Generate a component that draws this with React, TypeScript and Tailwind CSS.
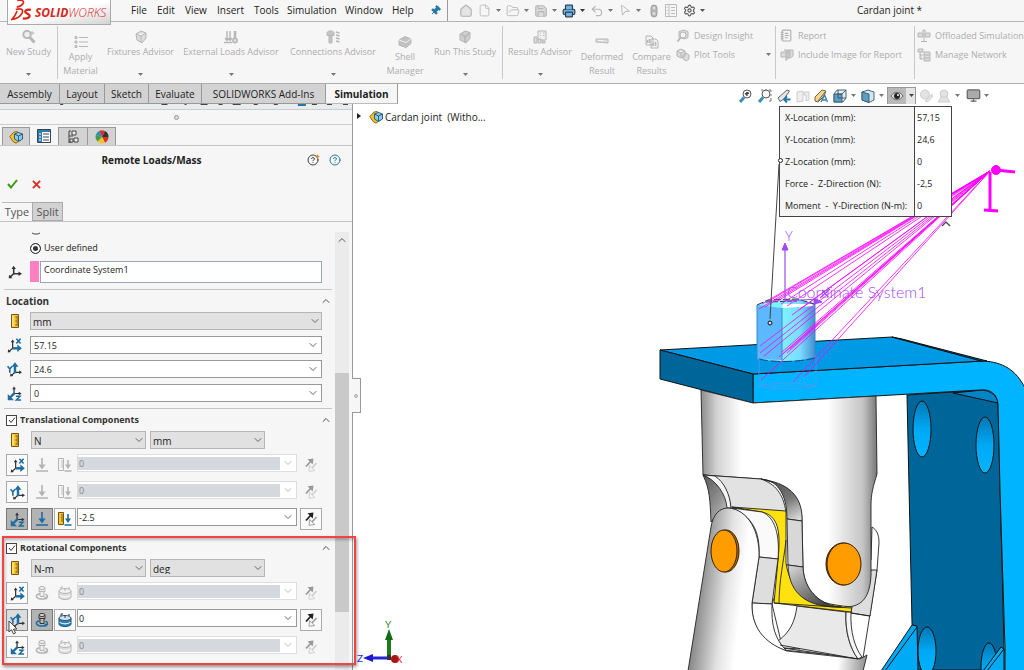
import { useState, type ReactNode } from "react";
import clsx from "clsx";
import {
  Box, ChevronDown, ChevronUp, CircleHelp, File, FolderOpen, Home, Monitor,
  MousePointer2, NotebookText, Pin, Printer, Save, Settings, Undo2,
} from "lucide-react";

const MENU = [
  { name: "File", width: "w-[26px]" },
  { name: "Edit", width: "w-[28px]" },
  { name: "View", width: "w-[32px]" },
  { name: "Insert", width: "w-[37px]" },
  { name: "Tools", width: "w-[33px]" },
  { name: "Simulation", width: "w-[58px]" },
  { name: "Window", width: "w-[47px]" },
  { name: "Help", width: "w-[38px]" },
];

const TABS = [
  { name: "Assembly", width: "w-[60px]" },
  { name: "Layout", width: "w-[45px]" },
  { name: "Sketch", width: "w-[44px]" },
  { name: "Evaluate", width: "w-[53px]" },
  { name: "SOLIDWORKS Add-Ins", width: "w-[124px]" },
  { name: "Simulation", width: "w-[72px]" },
];

const CALLOUT = [
  ["X-Location (mm):", "57,15"],
  ["Y-Location (mm):", "24,6"],
  ["Z-Location (mm):", "0"],
  ["Force -  Z-Direction (N):", "-2,5"],
  ["Moment  -  Y-Direction (N-m):", "0"],
];

// points on the shaft where the load is spread
const RAY_ENDS = [
  [759, 309], [762, 304], [765, 307], [769, 301], [776, 302], [781, 304], [787, 306],
  [792, 315], [799, 310], [760, 346], [760, 353], [764, 356],
  [779, 357], [782, 352], [783, 354], [787, 353], [790, 349], [761, 380], [793, 382], [804, 377],
];

type Axis = "x" | "y" | "z";

/* ---------- small icons ---------- */

function Caret({ className = "fill-[#777]" }: { className?: string }) {
  return (
    <svg viewBox="0 0 5 3" className={clsx("h-[3px] w-[5px] shrink-0", className)}>
      <path d="M0 0h5L2.5 3z" />
    </svg>
  );
}

function AxisIcon({ axis }: { axis?: Axis }) {
  const dark = "#333";
  const blue = "#1d6d9e";
  if (axis === "x") {
    return (
      <svg viewBox="0 0 16 16" className="size-[15px] shrink-0" fill="none">
        <path d="M6 11V4M6 11l-4 3.500" stroke={dark} strokeWidth="1.300" />
        <path d="M4 4.500 6 1.500l2 3zM.8 15.500l.4-3.500 3 3z" fill={dark} />
        <path d="M6 11h6" stroke={blue} strokeWidth="2.600" />
        <path d="m11 7 4.800 4L11 15z" fill={blue} />
        <path d="m10 .8 4.500 5M14.500.8 10 5.800" stroke={blue} strokeWidth="1.700" />
      </svg>
    );
  }
  if (axis === "y") {
    return (
      <svg viewBox="0 0 16 16" className="size-[15px] shrink-0" fill="none">
        <path d="M8.500 11H14M8.500 11l-4 3.500" stroke={dark} strokeWidth="1.300" />
        <path d="m13 9 3 2-3 2zM3.300 15.500l.4-3.500 3 3z" fill={dark} />
        <path d="M8.500 12V4" stroke={blue} strokeWidth="2.600" />
        <path d="m4.800 5 3.700-4.800L12.200 5z" fill={blue} />
        <path d="M.6 4.500 3 7.500l2.400-3M3 7.500v4" stroke={blue} strokeWidth="1.700" />
      </svg>
    );
  }
  if (axis === "z") {
    return (
      <svg viewBox="0 0 16 16" className="size-[15px] shrink-0" fill="none">
        <path d="M7.500 8V3M7.500 8H13" stroke={dark} strokeWidth="1.300" />
        <path d="m5.500 3.500 2-3 2 3zM12.500 6l3 2-3 2z" fill={dark} />
        <path d="m8 7.500-4.500 4.500" stroke={blue} strokeWidth="2.600" />
        <path d="M.8 8.500v6.700h6.700z" fill={blue} />
        <path d="M9.500 10.800h4.400L10 15h5" stroke={blue} strokeWidth="1.600" />
      </svg>
    );
  }
  return (
    <svg viewBox="0 0 16 16" className="size-[14px] shrink-0" fill="none">
      <path d="M6.500 10V3M6.500 10H13M6.500 10l-4 3.500" stroke={dark} strokeWidth="1.800" />
      <path d="M4 4.500 6.500.8 9 4.500zM12 7.500l4 2.500-4 2.500zM.8 15.200l.4-4.200 4 4z" fill={dark} />
    </svg>
  );
}

function RulerIcon() {
  return (
    <svg viewBox="0 0 8 14" className="h-[14px] w-[8px] shrink-0">
      <path d="M.5.5h7v13h-7z" fill="#f4c430" stroke="#7a5410" />
      <path d="M4.500 3H7M5.500 5H7M4.500 7H7M5.500 9H7M4.500 11H7" stroke="#5d3f08" strokeWidth=".9" />
      <path d="M2 1.500v11" stroke="#ffe78a" strokeWidth="1.500" />
    </svg>
  );
}

function ForceIcon({ on }: { on: boolean }) {
  const color = on ? "#1d6d9e" : "#b4b4b4";
  return (
    <svg viewBox="0 0 14 14" className="size-[14px]" fill="none">
      <path d="M7 0v10M1 13h12" stroke={color} strokeWidth="1.600" />
      <path d="m3.400 6.500 3.600 5 3.600-5z" fill={color} />
    </svg>
  );
}

function DistanceIcon({ on }: { on: boolean }) {
  const color = on ? "#1d6d9e" : "#b4b4b4";
  return (
    <svg viewBox="0 0 14 14" className="size-[14px]" fill="none">
      <path d="M.5.500h5v12h-5z" fill={on ? "#f4c430" : "#f5f5f5"} stroke={on ? "#7a5410" : "#b4b4b4"} />
      <path d="M3 3h2M3 5h2M3 7h2M3 9h2" stroke={on ? "#5d3f08" : "#b4b4b4"} strokeWidth=".8" />
      <path d="M10 2v8M6.500 13H13.500" stroke={color} strokeWidth="1.600" />
      <path d="m7 6.500 3 4.500 3-4.500z" fill={color} />
    </svg>
  );
}

function MomentIcon({ on }: { on: boolean }) {
  const line = on ? "#333" : "#b4b4b4";
  const arrow = on ? "#1d6d9e" : "#b4b4b4";
  return (
    <svg viewBox="0 0 14 14" className="size-[14px]" fill="none">
      <path d="M4 2.500h6v3H4zM5 5.500h4v5H5z" fill={on ? "#bbb" : "#eee"} stroke={line} />
      <ellipse cx="7" cy="2" rx="3" ry="1.500" fill={on ? "#ddd" : "#f1f1f1"} stroke={line} />
      <path d="M5 8H3.500C-.5 9.500 1.500 13 7 13s7-3.500 3.500-4.800" stroke={arrow} strokeWidth="1.600" />
      <path d="m9 10.500 4.500.8L10.800 14z" fill={arrow} />
    </svg>
  );
}

function TwistIcon({ on }: { on: boolean }) {
  return (
    <svg viewBox="0 0 14 14" className="size-[14px]" fill="none">
      <path d="M1 5v6c0 3.300 12 3.300 12 0V5" fill={on ? "#2f7fb0" : "#dedede"} stroke={on ? "#174e70" : "#b4b4b4"} />
      <ellipse cx="7" cy="5" rx="6" ry="2.500" fill={on ? "#cfe4f0" : "#f1f1f1"} stroke={on ? "#2b566f" : "#b4b4b4"} />
      <path d="M1.500 9c2 2.500 9 2.500 11 0" stroke={on ? "#e8f4fb" : "#fafafa"} strokeWidth="1.200" />
      <path d="M3 3V1h2M11 3V1M7 2v3" stroke={on ? "#333" : "#b4b4b4"} />
    </svg>
  );
}

function ReverseIcon({ on }: { on: boolean }) {
  return (
    <svg viewBox="0 0 14 14" className="size-[14px]" fill="none">
      <path d="M2 8.500 7 3" stroke={on ? "#222" : "#999"} strokeWidth="1.800" />
      <path d="M3.500 1.300 9.500.5 8.700 6.500z" fill={on ? "#222" : "#999"} />
      <path d="m12.500 5-5 5.500" stroke={on ? "#999" : "#ccc"} strokeWidth="1.500" />
      <path d="M10.800 12.500 5 13.300l.6-5.800z" fill="#f6f6f6" stroke={on ? "#999" : "#ccc"} strokeWidth=".9" />
    </svg>
  );
}

function AssemblyIcon() {
  return (
    <svg viewBox="0 0 14 14" className="size-[14px] shrink-0">
      <path d="M.8 6.500 5 2l3-.5 4 3v5l-5 3.700-3-1.700z" fill="#f2c22e" stroke="#85600c" strokeWidth=".9" />
      <path d="m5.500 4 4-1.500 4 1.500v5l-4 2.500-4-2.500z" fill="#8fcbe6" stroke="#1b4f78" strokeWidth=".9" />
      <path d="m5.500 4 4 2 4-2m-4 2v5" fill="none" stroke="#1b4f78" strokeWidth=".9" />
    </svg>
  );
}

function Logo() {
  return (
    <a href="#home" aria-label="SOLIDWORKS" className="absolute top-0 left-[7px] z-10 flex h-[25px] w-[104px] items-center border border-t-0 border-[#aaa] bg-linear-to-br from-white via-white to-[#d4d4d4] pl-[3px] text-[#d9261c]">
      <svg viewBox="0 0 20 20" className="mb-[4px] h-[21px] w-[21px] shrink-0" fill="none" stroke="#d9261c" strokeWidth="1.600">
        <path d="M6 .5c4-1 7 .2 5.500 2.800C10 5.500 8 6.500 5.500 6.800" />
        <path d="M4.500 9c5.500-1.500 7.500 0 6 3.500-1.500 3-4.500 5.300-9.500 6C3 16.500 4.500 14 5.800 10.500" />
        <path d="M19 9.500c-3-.8-5.500-.2-5.500 1.700s4.500 2 4.300 4-3.500 2.800-6.500 2.300" strokeWidth="2.200" />
      </svg>
      <span className="mt-[2px] ml-[3px] font-['Open_Sans',sans-serif] text-[12px] leading-none font-bold italic">
        SOLID<span className="font-light">WORKS</span>
      </span>
    </a>
  );
}

/* ---------- ribbon ---------- */

function QuickAccess() {
  const items: { name: string; icon: ReactNode; caret?: string }[] = [
    { name: "New", icon: <File size={13} strokeWidth={1.5} /> },
    { name: "Open", icon: <FolderOpen size={14} strokeWidth={1.5} /> },
    { name: "Save", icon: <Save size={14} className="fill-[#ddd]" /> },
    { name: "Print", icon: <Printer size={14} className="fill-[#6fb4e0] text-[#2b3f4d]" />, caret: "fill-[#333]" },
    { name: "Undo", icon: <Undo2 size={14} /> },
    { name: "Select", icon: <MousePointer2 size={13} strokeWidth={1.5} className="rotate-[15deg]" /> },
  ];
  return (
    <div className="ml-[11px] flex items-center text-[#b5b5b5]">
      <button aria-label="Home" className="mr-[5px] w-[14px]"><Home size={14} className="fill-[#e4e4e4]" /></button>
      {items.map((item) => (
        <button key={item.name} aria-label={item.name} className="flex w-[28px] items-center gap-[4px]">
          <span className="w-[14px]">{item.icon}</span>
          <Caret className={item.caret} />
        </button>
      ))}
      <button aria-label="Rebuild" className="w-[16px]">
        <svg viewBox="0 0 8 14" className="mx-auto h-[14px] w-[8px]">
          <rect x="1" y="1" width="6" height="12" rx="3" fill="#b5b5b5" stroke="#a0a0a0" />
          <circle cx="4" cy="4" r="1.500" fill="#ddd" />
          <circle cx="4" cy="9.500" r="1.500" fill="#ddd" />
        </svg>
      </button>
      <button aria-label="File properties" className="mr-[4px] ml-[3px] w-[14px]">
        <svg viewBox="0 0 12 13" className="h-[13px] w-[12px]" fill="none" stroke="#bbb">
          <path d="M.5.500h11v12H.500zM4 .5v12M6 3.500h4M6 6.500h4M6 9.500h4M1.500 3.500h1M1.500 6.500h1M1.500 9.500h1" />
        </svg>
      </button>
      <button aria-label="Options" className="flex w-[28px] items-center gap-[4px] text-[#555]">
        <Settings size={13} />
        <Caret className="fill-[#555]" />
      </button>
    </div>
  );
}

function RibbonButton({ icon, label, width, wrap }: { icon: ReactNode; label: string; width: string; wrap?: boolean }) {
  return (
    <button className={clsx("flex h-full shrink-0 flex-col items-center text-[9px]", width, wrap ? "pt-[13px]" : "pt-[8px]")}>
      <span className="flex h-[14px] items-center">{icon}</span>
      <span className={clsx("pt-px leading-[14px]", wrap ? "w-min whitespace-normal" : "whitespace-nowrap")}>{label}</span>
      {!wrap && <Caret className="mt-[14px] fill-[#777]" />}
    </button>
  );
}

function RibbonLine({ icon, label, caret }: { icon: ReactNode; label: string; caret?: boolean }) {
  return (
    <button className="flex h-[19px] w-full items-center gap-[4px] text-left text-[9px] whitespace-nowrap">
      <span className="w-[14px] shrink-0">{icon}</span>
      <span className="flex-1">{label}</span>
      {caret && <Caret className="mr-[4px] fill-[#777]" />}
    </button>
  );
}

function GrayIcon({ children }: { children: ReactNode }) {
  return (
    <svg viewBox="0 0 14 14" className="size-[14px]" fill="#dcdcdc" stroke="#b6b6b6" strokeLinejoin="round">
      {children}
    </svg>
  );
}

function Divider() {
  return <div className="my-[4px] w-px shrink-0 bg-[#c8c8c8]" />;
}

function Ribbon() {
  return (
    <div className="flex h-[62px] shrink-0 overflow-hidden border-b border-[#adadad] bg-[#f6f6f6] text-[#adadad]">
      <RibbonButton
        width="w-[57px]"
        label="New Study"
        icon={<GrayIcon><circle cx="5" cy="4.500" r="3.700" fill="#eee" strokeWidth="1.800" /><path d="m8 7.500 4.500 5" strokeWidth="3" /><path d="M10 1v4M8.500 3h4" /></GrayIcon>}
      />
      <Divider />
      <RibbonButton width="w-[45px]" label="Apply Material" wrap icon={<GrayIcon><path d="M1 1.500h2v2H1zM1 6h2v2H1zM1 10.500h2v2H1zM5 2.500h9M5 7h9M5 11.500h9" /></GrayIcon>} />
      <RibbonButton width="w-[75px]" label="Fixtures Advisor" icon={<GrayIcon><path d="m2 4 5-3 5 2v5L8 13l-5-3zM2 4l5 2 5-3M7 6v6" /></GrayIcon>} />
      <RibbonButton
        width="w-[106px]"
        label="External Loads Advisor"
        icon={<GrayIcon><path d="M3 1v9M6 1v9M0 12.500h8M1 8l2 2.500L4.500 8M4.500 8 6 10.500 8 8" fill="none" strokeWidth="1.400" /><path d="M11 1v7" strokeWidth="2.500" /><circle cx="11" cy="10.500" r="2.200" strokeWidth="1.400" /></GrayIcon>}
      />
      <RibbonButton
        width="w-[98px]"
        label="Connections Advisor"
        icon={<GrayIcon><path d="M1 2.500C2 .5 7 .5 8 2.500v3H1zM3 5.500h3V13H3z" fill="#c4c4c4" /><path d="m10 2 3.500 1M10 5l3.500 1M10 8l3.500 1M10 11l3.500 1" strokeWidth="1.800" /></GrayIcon>}
      />
      <RibbonButton width="w-[46px]" label="Shell Manager" wrap icon={<GrayIcon><path d="m1 5 6-3.500L13 4v4.500L8 12.500 1 10z" fill="#c2c2c2" /><path d="m1 5 7 2.500L13 4" fill="none" stroke="#eee" /></GrayIcon>} />
      <RibbonButton width="w-[74px]" label="Run This Study" icon={<GrayIcon><path d="m2 4 5-3 5 1.500v6L8 13l-6-3z" fill="#cfcfcf" /><path d="m4 4 3 3 5-4.500M7 7v5" fill="none" strokeWidth="1.600" /></GrayIcon>} />
      <Divider />
      <RibbonButton width="w-[74px]" label="Results Advisor" icon={<GrayIcon><path d="M5 1h8v9H5z" fill="#f1f1f1" /><path d="M7 3h1M10 3h1.500M7 5.500h1M10 5.500h1.500M1 7h3v6H1zM5 9h3v4H5zM9 11h3v2H9z" /></GrayIcon>} />
      <RibbonButton width="w-[50px]" label="Deformed Result" wrap icon={<GrayIcon><path d="M1 4h12v4h-2L9 7.500 1 7z" /><path d="M3 5.500h6" stroke="#f4f4f4" /></GrayIcon>} />
      <RibbonButton width="w-[49px]" label="Compare Results" wrap icon={<GrayIcon><path d="M1 1h5l2 2v7H1zM6 4h5l2 2v7H6z" fill="#f1f1f1" /><path d="M2.500 5v3M4.500 4v4M8 8v3M10.500 7v4" strokeWidth="1.500" /></GrayIcon>} />
      <div className="w-[99px] shrink-0 pt-[4px]">
        <RibbonLine label="Design Insight" icon={<GrayIcon><path d="M3 2.500 8 1l4 1.500v6L8 10 3 8z" /><circle cx="7" cy="6" r="3" fill="#f4f4f4" /><path d="m5 8-3.500 4.500" strokeWidth="2" /></GrayIcon>} />
        <RibbonLine label="Plot Tools" caret icon={<GrayIcon><path d="m1 3 4-2 4 2v5L5 10 1 8zM1 3l4 2 4-2M5 5v5M7 7l3-2 3 2v4l-3 2-3-2z" /></GrayIcon>} />
      </div>
      <Divider />
      <div className="w-[138px] shrink-0 pt-[4px] pl-[4px]">
        <RibbonLine label="Report" icon={<NotebookText size={13} />} />
        <RibbonLine label="Include Image for Report" icon={<GrayIcon><path d="M1 4h7v5H1zM4 2h9v6l-3 2H8" /><path d="m6 4 4-1.500V8L6 12.500z" fill="#c6c6c6" /></GrayIcon>} />
      </div>
      <Divider />
      <div className="shrink-0 pt-[4px] pl-[2px]">
        <RibbonLine label="Offloaded Simulation" icon={<GrayIcon><path d="M1 4h5v4H1zM8 4h5v4H8zM7 1v11M4 12.500h6M5 2.500 7 .5l2 2" /></GrayIcon>} />
        <RibbonLine label="Manage Network" icon={<GrayIcon><path d="M1 1h5v3H1zM3 4v7h3M3 7h3M7 4h6v9H7zM7 7h6M7 10h6" /></GrayIcon>} />
      </div>
    </div>
  );
}

function Magnifier({ area }: { area?: boolean }) {
  return (
    <svg viewBox="0 0 14 14" className="size-[14px]" fill="none">
      {area && <path d="M3 1h2M7 1h2M11 1h2v2M13 5v2M13 9v3h-2" stroke="#777" />}
      <path d="m1 13 4-4.500" stroke="#3d8cba" strokeWidth="3" />
      <circle cx="8" cy="5" r="4" fill="#f4f8fa" stroke="#555" />
      {!area && <path d="m6 5 4-1M8 3v4" stroke="#444" strokeWidth="1.300" />}
    </svg>
  );
}

function BlueBox({ solid }: { solid?: boolean }) {
  return (
    <svg viewBox="0 0 14 14" className="size-[14px]" stroke="#3b5568" strokeWidth=".9">
      {solid ? (
        <>
          <path d="m1 3 6-2 6 2v8l-5 2.500L1 11z" fill="#d3e6f0" />
          <path d="m1 3 7 2v8.500L1 11z" fill="#5b9fc8" />
        </>
      ) : (
        <>
          <path d="m1 5 3-4h9v8l-3 4H1z" fill="#e4edf2" />
          <path d="M1 5h8v8H1z" fill="#5b9fc8" />
          <path d="M5 1v8h8M9 5l4-4M9 5H4" fill="none" />
        </>
      )}
    </svg>
  );
}

function ViewToolbar() {
  return (
    <div className="mr-[35px] ml-auto flex items-center pt-[3px]">
      <button aria-label="Zoom to fit" className="w-[19px]"><Magnifier /></button>
      <button aria-label="Zoom to area" className="w-[19px]"><Magnifier area /></button>
      <button aria-label="Previous view" className="w-[19px]">
        <svg viewBox="0 0 14 14" className="size-[14px]" fill="none">
          <path d="m1 9 9-8 2.500 1L7 10l-4 2.500z" fill="#e6e6e6" stroke="#666" />
          <path d="M13.500 10.500H7m3-3-3 3 3 3" stroke="#2577a8" strokeWidth="1.800" />
        </svg>
      </button>
      <button aria-label="Section view" className="w-[18px]">
        <svg viewBox="0 0 14 14" className="size-[14px]" fill="#eee" stroke="#ccc"><path d="m1 3 6-1v10l-6 1zM8 3h5v8l-3 1V6H8z" /></svg>
      </button>
      <button aria-label="Dynamic annotation" className="w-[19px]">
        <svg viewBox="0 0 14 14" className="size-[14px]" fill="none">
          <path d="m1 8 7-7 4 1-2 5-6 6-3-1z" fill="#f3d58d" stroke="#7a6336" />
          <path d="m4 12 7-9" stroke="#666" />
          <path d="m7 13 3.500-7 3 7M8 11h4" stroke="#3a7da8" strokeWidth="1.400" />
        </svg>
      </button>
      <button aria-label="View orientation" className="flex w-[28px] items-center gap-[4px]"><BlueBox /><Caret /></button>
      <button aria-label="Display style" className="flex w-[26px] items-center gap-[4px]"><BlueBox solid /><Caret /></button>
      <button aria-label="Hide or show items" className="flex h-[18px] w-[29px] items-center border border-[#999] bg-[#e4e4e4]">
        <span className="flex h-full w-[18px] items-center justify-center bg-[#b9b9b9]">
          <svg viewBox="0 0 14 10" className="h-[10px] w-[14px]">
            <path d="M1 5c3-5 9-5 12 0-3 5-9 5-12 0z" fill="#ddd" stroke="#666" />
            <circle cx="7" cy="5" r="3" fill="#222" />
            <circle cx="8" cy="4" r="1" fill="#fff" />
          </svg>
        </span>
        <Caret className="ml-[3px] fill-[#444]" />
      </button>
      <button aria-label="Edit appearance" className="ml-[3px] w-[18px]">
        <svg viewBox="0 0 14 14" className="size-[14px]" fill="#e2e2e2" stroke="#d0d0d0"><circle cx="6" cy="5.500" r="4.500" /><path d="m6 12 7-7 .5 3-5 5z" /></svg>
      </button>
      <button aria-label="Apply scene" className="flex w-[29px] items-center gap-[4px]">
        <svg viewBox="0 0 14 14" className="size-[14px]" fill="#e2e2e2" stroke="#d0d0d0"><circle cx="7" cy="5" r="4" /><path d="M1 13 4 8h6l3 5z" /></svg>
        <Caret />
      </button>
      <button aria-label="View settings" className="flex items-center gap-[3px]"><Monitor size={15} className="fill-[#aaa] text-[#666]" /><Caret /></button>
    </div>
  );
}

/* ---------- property manager ---------- */

function Section({ title, checkbox, children }: { title: string; checkbox?: boolean; children: ReactNode }) {
  const [open, setOpen] = useState(true);
  return (
    <section className="mr-[3px] ml-[4px] border-t border-[#c4c4c4] pb-[6px] pl-[2px]">
      <div className="flex h-[22px] items-center text-[9px] font-bold text-[#333]">
        {checkbox ? (
          <label className="flex items-center gap-[3px]">
            <input type="checkbox" defaultChecked className="peer sr-only" />
            <span className="flex size-[11px] items-center justify-center border border-[#444] bg-white">
              <svg viewBox="0 0 8 8" className="size-[8px]" fill="none" stroke="#333"><path d="m1 4 2 2.500L7 1.500" /></svg>
            </span>
            {title}
          </label>
        ) : (
          <h2 className="text-[10px]">{title}</h2>
        )}
        <button aria-label={`Toggle ${title}`} onClick={() => setOpen(!open)} className="ml-auto">
          <ChevronUp size={12} className={clsx("text-[#555]", !open && "rotate-180")} />
        </button>
      </div>
      {open && children}
    </section>
  );
}

function UnitSelect({ label, value, width }: { label: string; value: string; width: string }) {
  return (
    <div className={clsx("relative h-[18px]", width)}>
      <select aria-label={label} defaultValue={value} className="block h-full w-full appearance-none border border-[#b5b5b5] bg-[#e1e1e1] pt-px pl-[2px] text-[10px] leading-none text-[#222]">
        <option>{value}</option>
      </select>
      <ChevronDown size={12} className="pointer-events-none absolute top-[3px] right-px text-[#666]" />
    </div>
  );
}

function ComboBox({ label, value, disabled, tall }: { label: string; value: string; disabled?: boolean; tall?: boolean }) {
  return (
    <div className={clsx("flex min-w-0 flex-1 items-center border bg-white", tall ? "h-[18px]" : "h-[18px]", disabled ? "border-[#ddd]" : "border-[#999]")}>
      <input
        aria-label={label}
        defaultValue={value}
        disabled={disabled}
        className={clsx("min-w-0 flex-1 text-[9px] leading-[13px] outline-none", tall ? "pl-[3px]" : "pl-px", disabled ? "bg-[#d5d8dd] text-[#888]" : "text-[#222]")}
      />
      <button aria-label={`${label} list`} disabled={disabled} className={clsx("flex w-[16px] justify-center", disabled ? "text-[#bbb]" : "text-[#666]")}>
        <ChevronDown size={12} />
      </button>
    </div>
  );
}

function IconToggle({ label, pressed, boxed, hovered, children }: { label: string; pressed?: boolean; boxed?: boolean; hovered?: boolean; children: ReactNode }) {
  return (
    <button
      aria-label={label}
      aria-pressed={pressed}
      className={clsx(
        "flex size-[22px] shrink-0 items-center justify-center border",
        pressed ? "border-[#777] bg-[#b3b3b3]" : hovered ? "border-[#888] bg-[#dcdcdc]" : boxed ? "border-[#aaa] bg-[#fafafa]" : "border-transparent",
      )}
    >
      {children}
    </button>
  );
}

function ComponentRow({ axis, value, active, hovered, rotation }: { axis: Axis; value: string; active?: boolean; hovered?: boolean; rotation?: boolean }) {
  const kind = rotation ? "rotation" : "translation";
  return (
    <div className="flex h-[22px] pr-[10px]">
      <IconToggle label={`${axis.toUpperCase()} ${kind}`} boxed hovered={hovered} pressed={active && !hovered}>
        <AxisIcon axis={axis} />
      </IconToggle>
      <span className="w-[3px]" />
      <IconToggle label={rotation ? "Moment" : "Force"} pressed={active}>
        {rotation ? <MomentIcon on={!!active} /> : <ForceIcon on={!!active} />}
      </IconToggle>
      <span className="w-px" />
      <IconToggle label={rotation ? "Twist" : "Distance"} boxed={active}>
        {rotation ? <TwistIcon on={!!active} /> : <DistanceIcon on={!!active} />}
      </IconToggle>
      <span className="w-px" />
      <ComboBox label={`${axis.toUpperCase()} ${kind} value`} value={value} disabled={!active} />
      <span className="w-[3px]" />
      <IconToggle label="Reverse direction" boxed={active}>
        <ReverseIcon on={!!active} />
      </IconToggle>
    </div>
  );
}

function UnitRow({ first, second }: { first: string; second: string }) {
  return (
    <div className="flex items-center">
      <span className="flex w-[25px] pl-[5px]"><RulerIcon /></span>
      <UnitSelect label="Unit" value={first} width="w-[115px]" />
      <span className="w-[4px]" />
      <UnitSelect label="Length unit" value={second} width="w-[115px]" />
    </div>
  );
}

function PanelTabs() {
  return (
    <div className="flex h-[21px] shrink-0 items-end border-b border-[#c4c4c4] pl-[2px]">
      <button aria-label="Feature tree" className="flex h-[18px] w-[28px] items-center justify-center border border-b-0 border-[#999] bg-[#d2d2d2]"><AssemblyIcon /></button>
      <button aria-label="Property manager" className="flex h-[18px] w-[28px] items-center justify-center">
        <svg viewBox="0 0 14 14" className="size-[14px]">
          <path d="M.5.500h13v13H.500z" fill="#fff" stroke="#345" />
          <path d="M1 1h12v2H1zM1 3h4v10H1z" fill="#2d7cab" />
          <path d="M2 5h2M2 8h2M2 11h2" stroke="#fff" />
          <path d="M6 5h6M6 8h6M6 11h6" stroke="#345" />
        </svg>
      </button>
      <button aria-label="Configurations" className="flex h-[18px] w-[30px] items-center justify-center border border-b-0 border-[#999] bg-[#d2d2d2]">
        <svg viewBox="0 0 12 14" className="h-[14px] w-[12px]" fill="#eee" stroke="#444">
          <path d="M2 1v12M2 1h2M2 6h4M2 12h3" fill="none" />
          <path d="M5 1h4v4H5zM7 8h4v4H7zM3 9h3v3H3z" />
        </svg>
      </button>
      <button aria-label="Display manager" className="flex h-[18px] w-[28px] items-center justify-center border border-b-0 border-l-0 border-[#999] bg-[#d2d2d2]">
        <svg viewBox="0 0 14 14" className="size-[14px]">
          <path d="M7 7 4 1a6.500 6.500 0 0 1 6 0z" fill="#d8342a" />
          <path d="M7 7 10 1a6.500 6.500 0 0 1 3.500 6z" fill="#333" />
          <path d="M7 7h6.500A6.500 6.500 0 0 1 10 12.700z" fill="#d8342a" />
          <path d="m7 7 3 5.700A6.500 6.500 0 0 1 2.500 11.500z" fill="#f2c22e" />
          <path d="m7 7-4.500 4.500A6.500 6.500 0 0 1 .8 5z" fill="#3da23d" />
          <path d="M7 7 .8 5A6.500 6.500 0 0 1 4 1z" fill="#2f8bc0" />
        </svg>
      </button>
    </div>
  );
}

function PropertyPanel() {
  return (
    <aside className="relative z-10 flex w-[353px] shrink-0 flex-col border-r border-[#999] bg-[#f6f6f6]">
      <div className="h-[6px] shrink-0 border-b border-[#c9cfcf] bg-[#e9ecec]">
        <svg viewBox="0 0 351 2" className="h-[2px] w-full" preserveAspectRatio="none">
          <path d="M60 .5h3M161 .5h6M184 .5h2M200 .5h7M218 .5h4M232 .5h8M253 .5h4M273 .5h4M311 .5h5M326 .5h5M342 .5h5" stroke="#444" />
          <path d="M297 1h8" stroke="#2577a8" strokeWidth="2" />
        </svg>
      </div>
      <div className="flex h-[15px] shrink-0 items-center justify-center border-b border-[#ccc]">
        <span className="size-[5px] rounded-full border border-[#999] bg-[#ddd]" />
      </div>
      <PanelTabs />
      <div className="flex h-[28px] shrink-0 items-center">
        <h1 className="w-[303px] text-center text-[10px] font-bold text-[#222]">Remote Loads/Mass</h1>
        <button aria-label="What's new" className="ml-[4px] flex text-[#444]">
          <CircleHelp size={12} />
          <svg viewBox="0 0 5 5" className="-ml-[4px] size-[5px]"><path d="m2.500 0 .8 1.700L5 2.500l-1.700.8-.8 1.700-.8-1.700L0 2.500l1.700-.8z" fill="#d08a1c" /></svg>
        </button>
        <button aria-label="Help" className="ml-[9px] text-[#2577a8]"><CircleHelp size={12} /></button>
      </div>
      <div className="flex h-[20px] shrink-0 items-center gap-[14px] pl-[7px]">
        <button aria-label="OK">
          <svg viewBox="0 0 11 10" className="h-[10px] w-[11px]" fill="none" stroke="#3b9a12" strokeWidth="2"><path d="m1 5 3 3.500L10 1" /></svg>
        </button>
        <button aria-label="Cancel">
          <svg viewBox="0 0 10 10" className="size-[9px]" fill="none" stroke="#dc2a20" strokeWidth="2"><path d="m1 1 8 8M9 1 1 9" /></svg>
        </button>
      </div>
      <div className="flex h-[28px] shrink-0 items-end border-b border-[#c4c4c4] pl-[2px] text-[11px] text-[#555]">
        <button className="h-[19px] w-[30px] border-t border-[#bbb] leading-[18px]">Type</button>
        <button className="h-[19px] w-[31px] border border-[#aaa] bg-[#d2d2d2] leading-[17px]">Split</button>
      </div>

      <div className="mt-[10px] flex min-h-0 flex-1">
        <div className="min-w-0 flex-1 overflow-hidden">
          <svg viewBox="0 0 12 6" className="ml-[30px] h-[6px] w-[12px]" fill="none" stroke="#444"><path d="M2 1c2 1.500 6 1.500 8 0" /></svg>
          <label className="flex h-[20px] items-center gap-[3px] pl-[30px] text-[9px] text-[#222]">
            <input type="radio" name="reference" defaultChecked className="size-[11px] appearance-none rounded-full border border-[#333] bg-[#333] shadow-[inset_0_0_0_2px_#fff]" />
            User defined
          </label>
          <div className="mb-[6px] flex h-[25px] items-center pt-[2px] pr-[13px] pl-[8px]">
            <AxisIcon />
            <span className="ml-[8px] h-[21px] w-[9px] bg-[#ff80c0]" />
            <input aria-label="Coordinate system" defaultValue="Coordinate System1" className="ml-px h-[22px] min-w-0 flex-1 border border-[#9aa5b5] bg-white pb-[4px] pl-[3px] text-[9px] text-[#222] outline-none" />
          </div>
          <Section title="Location">
            <div className="flex flex-col gap-[6px] pr-[10px]">
              <div className="flex items-center">
                <span className="flex w-[24px] shrink-0 pl-[5px]"><RulerIcon /></span>
                <UnitSelect label="Location unit" value="mm" width="w-full" />
              </div>
              {([["x", "57.15"], ["y", "24.6"], ["z", "0"]] as [Axis, string][]).map(([axis, value]) => (
                <div key={axis} className="flex items-center">
                  <span className="w-[24px] pl-px"><AxisIcon axis={axis} /></span>
                  <ComboBox label={`${axis.toUpperCase()} location`} value={value} tall />
                </div>
              ))}
            </div>
          </Section>
          <Section title="Translational Components" checkbox>
            <UnitRow first="N" second="mm" />
            <div className="mt-[5px] flex flex-col gap-[5px]">
              <ComponentRow axis="x" value="0" />
              <ComponentRow axis="y" value="0" />
              <ComponentRow axis="z" value="-2.5" active />
            </div>
          </Section>
          <Section title="Rotational Components" checkbox>
            <UnitRow first="N-m" second="deg" />
            <div className="mt-[5px] flex flex-col gap-[5px]">
              <ComponentRow axis="x" value="0" rotation />
              <ComponentRow axis="y" value="0" active hovered rotation />
              <ComponentRow axis="z" value="0" rotation />
            </div>
          </Section>
          <div className="mr-[3px] ml-[4px] border-t border-[#c4c4c4]" />
        </div>
        {/* scrollbar */}
        <div className="mr-[3px] flex w-[14px] shrink-0 flex-col items-center bg-[#ebebeb]">
          <ChevronUp size={12} className="mt-[2px] shrink-0 text-[#555]" />
          <div className="mt-[127px] h-[239px] w-full shrink-0 bg-[#c9c9c9]" />
        </div>
      </div>

      {/* highlighted group */}
      <div className="pointer-events-none absolute top-[432px] left-[2px] h-[129px] w-[354px] border-2 border-[#f04540] shadow-[1px_2px_3px_rgba(0,0,0,0.4),inset_1px_2px_3px_rgba(0,0,0,0.25)]" />
      <svg viewBox="0 0 10 15" className="absolute top-[516px] left-[8px] h-[15px] w-[10px]"><path d="M1 1v11l2.500-2.300L5.500 14l2-1-2-4H9z" fill="#fff" stroke="#333" strokeWidth=".9" /></svg>
      {/* splitter grip */}
      <div className="absolute top-[274px] left-[352px] flex h-[35px] w-[9px] items-center justify-center border border-l-0 border-[#999] bg-[#f6f6f6]">
        <span className="size-[4px] rounded-full border border-[#aaa] bg-[#ddd]" />
      </div>
    </aside>
  );
}

/* ---------- graphics area ---------- */

function Model() {
  return (
    <svg viewBox="353 104 671 566" preserveAspectRatio="xMaxYMin slice" className="absolute inset-0 h-full w-full" strokeLinejoin="round">
      <defs>
        <linearGradient id="shaft" x1="0" x2="1">
          <stop offset="0" stopColor="#8c8c8c" />
          <stop offset=".09" stopColor="#d2d2d2" />
          <stop offset=".23" stopColor="#fff" />
          <stop offset=".72" stopColor="#fff" />
          <stop offset=".92" stopColor="#c4c4c4" />
          <stop offset="1" stopColor="#777" />
        </linearGradient>
        <linearGradient id="fork" gradientUnits="userSpaceOnUse" x1="697" y1="590" x2="870" y2="610">
          <stop offset="0" stopColor="#858585" />
          <stop offset=".16" stopColor="#e2e2e2" />
          <stop offset=".26" stopColor="#fff" />
          <stop offset=".85" stopColor="#fff" />
          <stop offset="1" stopColor="#999" />
        </linearGradient>
        <linearGradient id="curve" x1="0" y1="0" x2="1" y2="1">
          <stop offset="0" stopColor="#555" />
          <stop offset=".6" stopColor="#999" />
          <stop offset="1" stopColor="#ddd" />
        </linearGradient>
        <linearGradient id="bandTop" gradientUnits="userSpaceOnUse" x1="775" y1="482" x2="796" y2="520">
          <stop offset="0" stopColor="#555" />
          <stop offset=".5" stopColor="#777" />
          <stop offset="1" stopColor="#d8d8d8" />
        </linearGradient>
        <linearGradient id="bandBottom" gradientUnits="userSpaceOnUse" x1="795" y1="567" x2="822" y2="606">
          <stop offset="0" stopColor="#ccc" />
          <stop offset=".5" stopColor="#888" />
          <stop offset="1" stopColor="#444" />
        </linearGradient>
        <linearGradient id="hole" x1="0" y1="0" x2="0" y2="1">
          <stop offset="0" stopColor="#0077b3" />
          <stop offset=".5" stopColor="#00a8f5" />
          <stop offset="1" stopColor="#00b4ff" />
        </linearGradient>
        <linearGradient id="pin" gradientUnits="userSpaceOnUse" x1="782" y1="0" x2="815" y2="0">
          <stop offset="0" stopColor="#7cf4ff" />
          <stop offset=".55" stopColor="#7bdcff" />
          <stop offset="1" stopColor="#438fd0" />
        </linearGradient>
      </defs>

      {/* bracket */}
      <g stroke="#111">
        <path d="M907 395 953 392 983 390 998 404 1004 648 1004 670H916L912 623z" fill="#006699" />
        <path d="M953 393 983 390C991 391 997 396 998 403z" fill="#0086c8" />
        <ellipse cx="922" cy="429" rx="9" ry="28" fill="url(#hole)" />
        <ellipse cx="985" cy="445" rx="9" ry="28" fill="url(#hole)" />
        <ellipse cx="927" cy="651" rx="9" ry="24" fill="url(#hole)" />
        <ellipse cx="989" cy="667" rx="8" ry="24" fill="url(#hole)" />
        <path d="M753 374 983 361C1003 362 1016 370 1025 388V671H1005V648L1000 490 998 404C997 394 991 389 980 390L753 403z" fill="#00b4ff" />
        <path d="M660 350 892 337 983 361 753 374z" fill="#0099e6" />
        <path d="M892 337 902 339 987 361 981 361z" fill="#006699" />
        <path d="M660 350 753 374V403L660 379z" fill="#006699" />
        <path d="M881 671 912 625 917 626 918 671z" fill="#00aaf5" />
        <path d="M885 671 917 627" fill="none" />
        <path d="M983 671 1001 647 1004 649V671z" fill="#00aaf5" />
        <path d="M987 671 1004 649" fill="none" />
      </g>

      {/* lower fork, far side */}
      <g stroke="#222" strokeWidth=".9">
        <path d="M872 527C877 530 879 535 879 543L877 570 863 658 783 650 772 604 786 565 871 560z" fill="#fff" />
        <path d="M877 570 870 616 851 613 852 604 864 595 871 570z" fill="#dedede" />
        <path d="M797 606 846 612C845 632 850 648 858 659L783 648 778 641C790 632 795 622 797 606z" fill="#e9e9e9" />
        <path d="M846 612H851C850 632 855 648 862 657L858 659C850 648 845 632 846 612z" fill="#f5f5f5" />
        <path d="M851 613 870 616" fill="none" />
      </g>

      {/* upper fork */}
      <g stroke="#222" strokeWidth=".9">
        <path d="M701 390 753 403 876 396 877 474C873 487 871 494 871 505V575C870 596 863 607 845 607 822 607 804 592 803 568L802 520C801 496 790 486 761 479L703 475z" fill="url(#shaft)" />
        <path d="M703 475C710 490 710 500 711 522L720 511 731 508C727 492 720 480 703 475z" fill="url(#curve)" />
        <path d="M703 475 761 479C775 484 783 493 786 512L731 508C729 494 722 482 714 476" fill="#e2e2e2" />
        <path d="M703 475 715 476C724 482 730 494 731 508L727 508C726 494 716 480 703 475z" fill="#f4f4f4" />
        <path d="M761 479 767 480C780 484 787 498 787 519L802 521C803 500 792 484 765 480z" fill="url(#bandTop)" />
        <path d="M787 519 802 521 803 567 788 565z" fill="#d8d8d8" />
        <path d="M732 507 786 511 786 563C790 590 806 603 852 607L851 612 774 603 778 560C781 530 778 516 762 512z" fill="#ffe10f" />
        <path d="M786 540C784 560 779 580 779 604M774 603 851 608" fill="none" />
        <path d="M788 565 803 567C804 590 820 606 842 607 808 608 789 595 788 565z" fill="url(#bandBottom)" />
      </g>

      {/* lower fork, near side */}
      <g stroke="#222" strokeWidth=".9">
        <path d="M732 508 762 512C775 517 780 535 778 559L759 557C760 535 755 522 740 512z" fill="#fafafa" />
        <path d="M759 557 778 559 772 604 752 603z" fill="#dedede" />
        <path d="M752 603 772 604C771 625 775 640 787 651 766 645 751 630 752 603z" fill="#fff" />
        <path d="M711 527C713 514 720 508 728 508 748 509 760 532 759 557L752 603C751 632 770 645 787 651L860 659 867 655 863 671H688z" fill="url(#fork)" />
        <path d="M780 645 858 659M784 648 800 649" fill="none" />
      </g>
      <g fill="#ff9c00" stroke="#332000">
        <ellipse cx="726" cy="551" rx="13" ry="21" fill="#b86f00" />
        <ellipse cx="724" cy="551" rx="13" ry="21" />
        <ellipse cx="843" cy="564" rx="17" ry="21" fill="#b86f00" />
        <ellipse cx="844" cy="564" rx="17" ry="21" />
      </g>

      {/* loaded pin */}
      <path d="M757 305 768 300 797 299 815 304V357C800 362 775 362 757 359z" fill="url(#pin)" />
      <path d="M757 305 782 308V360L757 359z" fill="#5cb8ff" />
      <path d="M782 308 783 304 812 304 815 306z" fill="#fff" />
      <path d="M757 305 768 300 797 299 815 304" fill="none" stroke="#333" strokeDasharray="7 2" />
      <path d="M766 302 797 301" stroke="#444" strokeDasharray="5 2" />
      <path d="M757 305V359M815 304V357M782 308V360" stroke="#3987c9" />
      <path d="M759 359C775 363 800 362 815 358" fill="none" stroke="#174a77" strokeDasharray="9 3" />
      <path d="M759 359V386H816V355M759 386C775 382 800 382 816 386 800 390 775 390 759 386" fill="none" stroke="#4a9cf0" strokeWidth=".8" />

      {/* remote load */}
      <g stroke="#f0f" strokeWidth=".8">
        {RAY_ENDS.map(([x, y]) => (
          <line key={`${x}-${y}`} x1="990" y1="171" x2={x} y2={y} />
        ))}
      </g>
      <g stroke="#f0f" fill="#f0f">
        <circle cx="996" cy="170" r="4.500" />
        <path d="M996 170 1015 172M990 172V209M984 210 998 211" strokeWidth="3" fill="none" />
      </g>

      {/* local coordinate system */}
      <g stroke="#9d4bf5" fill="#9d4bf5">
        <path d="M785 301V248M785 301 818 299M820 298 830 289M822 290 828 297" strokeWidth="1.200" />
        <path d="M785 243 788 250H782zM822 302 814 298V304z" />
        <g stroke="none" className="font-['Lato',sans-serif] font-light">
          <text x="785" y="241" fontSize="13">Y</text>
          <text x="787" y="298" fontSize="16">Coordinate System1</text>
        </g>
      </g>
      <path d="M779 164 770 319" stroke="#444" fill="none" />
      <circle cx="770" cy="323" r="2" fill="#ddd" stroke="#111" />
      <path d="m942 226 4-4 4 4" fill="none" stroke="#555" strokeWidth="1.500" />

      {/* view triad */}
      <path d="M389 657V638" stroke="#1d7a1d" strokeWidth="4" />
      <path d="m389 629 4 11h-8z" fill="#156b15" />
      <path d="M390 658H372" stroke="#2323d8" strokeWidth="3" />
      <path d="m363 658 10-4v8z" fill="#1c1ccc" />
      <circle cx="395" cy="659" r="4" fill="#a81414" />
      <path d="M387 655h4v5h-4z" fill="#333" />
      <g fontSize="10" className="font-['Lato',sans-serif]">
        <text x="385" y="628" fill="#2b8a2b">Y</text>
        <text x="357" y="662" fill="#2c2ce0">Z</text>
        <text x="396" y="663" fill="#e03030">X</text>
      </g>
    </svg>
  );
}

function GraphicsArea() {
  return (
    <main className="relative min-w-0 flex-1 overflow-hidden bg-white">
      <Model />
      <div className="relative flex items-center gap-[2px] pt-[6px] pl-[4px] text-[10px] text-[#222]">
        <svg viewBox="0 0 4 6" className="mb-[4px] h-[6px] w-[4px]"><path d="m0 0 4 3-4 3z" fill="#222" /></svg>
        <span className="mb-px ml-[6px]"><AssemblyIcon /></span>
        <a href="#cardan-joint" className="whitespace-pre">Cardan joint  (Witho...</a>
      </div>
      <table className="absolute top-[2px] right-[72px] w-[173px] border-collapse border border-[#444] bg-white text-[9px] text-[#222]">
        <tbody>
          {CALLOUT.map(([label, value]) => (
            <tr key={label} className="h-[22px]">
              <th className="border-r border-[#444] bg-[#f5f5f5] pl-[5px] text-left font-normal whitespace-pre">{label}</th>
              <td className="w-[37px] pl-[2px]">{value}</td>
            </tr>
          ))}
        </tbody>
      </table>
      <span className="absolute top-[54px] right-[241px] size-[5px] rounded-full border border-[#222] bg-white" />
    </main>
  );
}

export default function App() {
  return (
    <div className="flex h-screen flex-col overflow-hidden bg-white font-['Open_Sans','Noto_Sans',sans-serif]">
      <header className="relative flex h-[22px] shrink-0 items-center border-b border-[#b4b4b4] bg-[#f6f6f6]">
        <Logo />
        <nav className="ml-[131px] flex text-[10px] text-[#222]">
          {MENU.map((item) => (
            <button key={item.name} className={clsx("text-left whitespace-nowrap", item.width)}>{item.name}</button>
          ))}
        </nav>
        <button aria-label="Pin menu" className="mr-[6px] text-[#2577a8]"><Pin size={11} className="rotate-45 fill-[#2577a8]" /></button>
        <div className="h-full w-px bg-[#999]" />
        <QuickAccess />
        <div className="flex-1 pl-[89px] text-center text-[10px] whitespace-nowrap text-[#222]">Cardan joint *</div>
        <div className="w-[45px]" />
      </header>

      <Ribbon />

      <div className="flex h-[20px] shrink-0">
        {TABS.map((tab) => (
          <button
            key={tab.name}
            className={clsx(
              "h-full shrink-0 border-r border-b border-[#999] pt-px text-[10px] whitespace-nowrap text-[#222]",
              tab.width,
              tab.name === "Simulation" ? "border-b-[#bbb] bg-[#f6f6f6] font-bold" : "bg-[#d2d2d2]",
            )}
          >
            {tab.name}
          </button>
        ))}
        <ViewToolbar />
      </div>

      <div className="flex min-h-0 flex-1">
        <PropertyPanel />
        <GraphicsArea />
      </div>
    </div>
  );
}
